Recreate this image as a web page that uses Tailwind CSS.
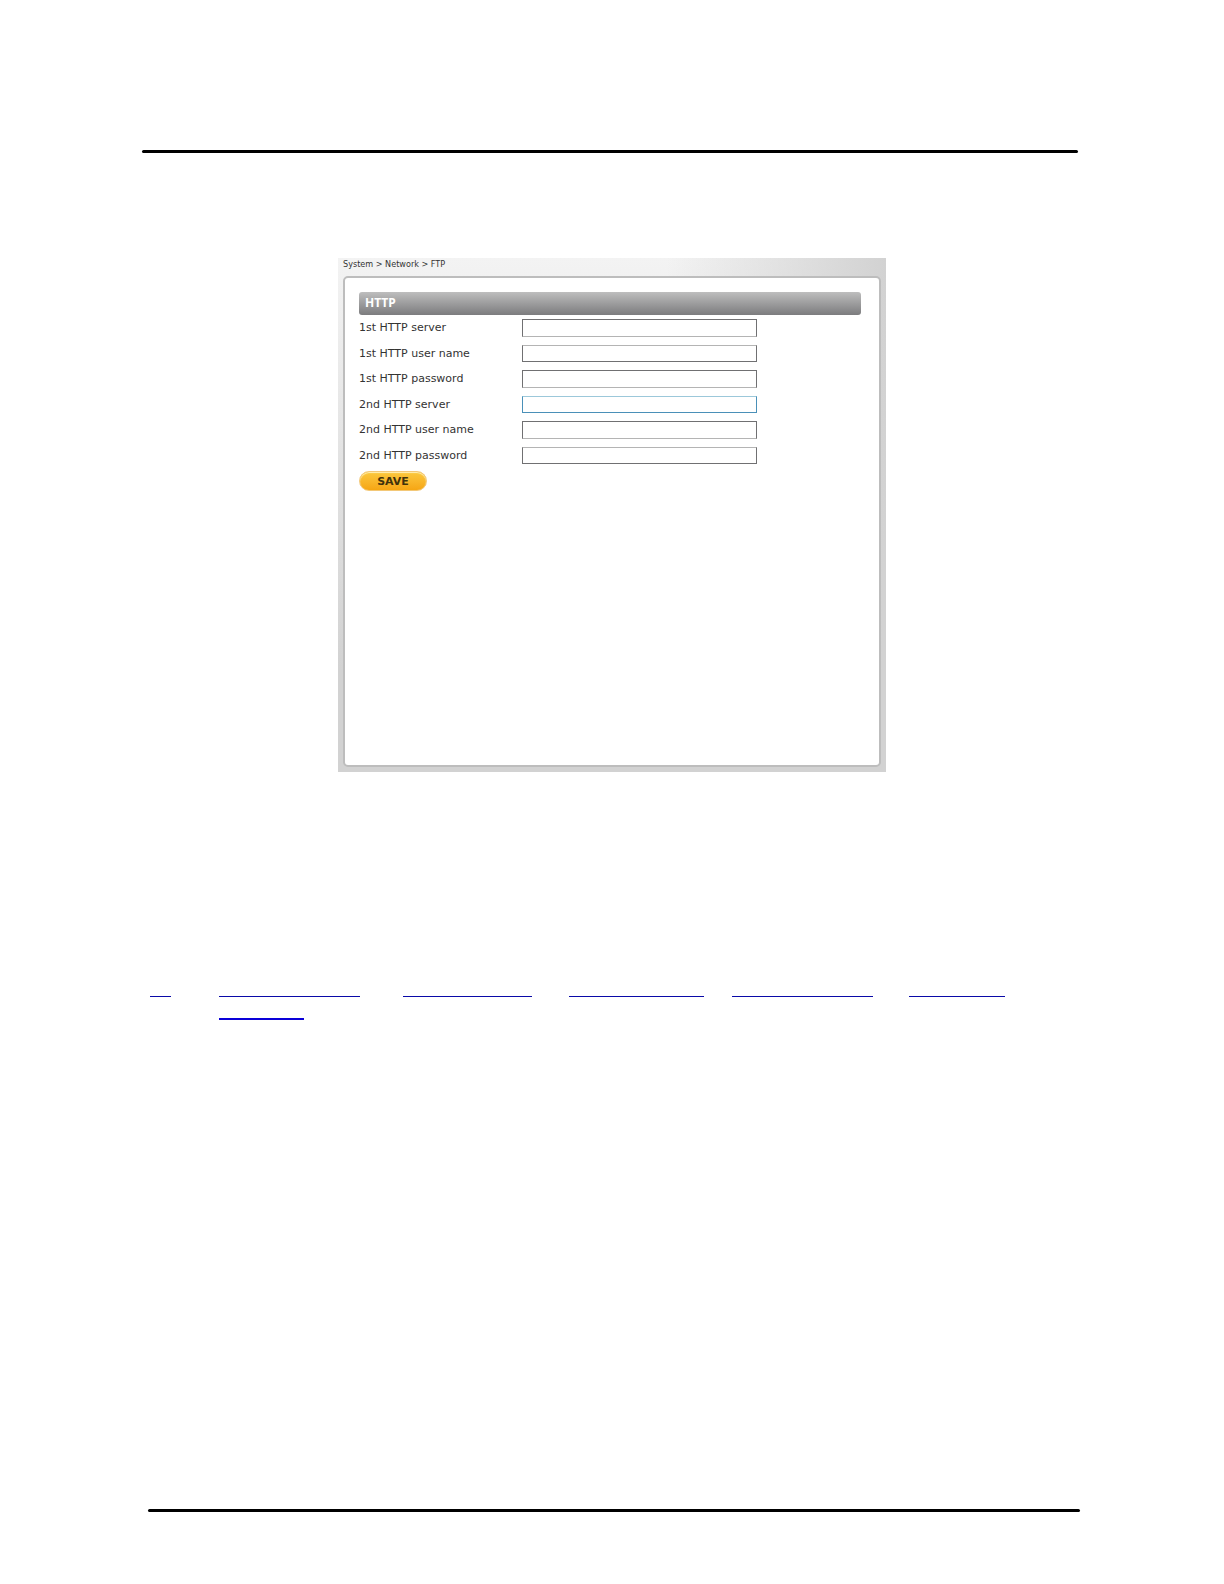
<!DOCTYPE html>
<html lang="en">
<head>
    <meta charset="UTF-8">
    <meta name="viewport" content="width=device-width, initial-scale=1">
    <title>System &gt; Network &gt; FTP</title>
    <script src="https://cdn.jsdelivr.net/npm/@tailwindcss/browser@4"></script>
</head>
<body class="bg-white pt-[150px] text-[#333] font-['DejaVu_Sans',sans-serif]">
    <hr class="ml-[142px] mr-[146px] h-[3px] rounded-full border-0 bg-black">

    <!-- Settings panel -->
    <main class="mx-auto mt-[105px] max-w-[548px] bg-linear-to-b from-[#f3f3f3] to-[#d2d2d2] to-80%">
        <div class="bg-linear-to-r from-transparent from-60% to-[#d2d2d2] px-[5px] pb-[5px]">
            <nav class="h-[18px] text-[9px] leading-[13px] font-['DejaVu_Sans_Condensed','DejaVu_Sans',sans-serif] font-stretch-condensed">System &gt; Network &gt; FTP</nav>

            <section class="min-h-[491px] rounded-[5px] border-2 border-[#bdbdbd] bg-white px-[14px] pt-[14px]">
                <h1 class="mr-1 h-[23px] rounded-[3px] bg-linear-to-b from-[#bebebe] to-[#7c7c7e] pl-[6px] font-['Noto_Sans',sans-serif] text-[12px] leading-[22px] font-bold text-white">HTTP</h1>

                <form class="mt-1 text-[11px] leading-[18px]">
                    <div class="grid grid-cols-[163px_235px] gap-y-2">
                        <label for="server1" class="h-[17px]">1st HTTP server</label>
                        <input id="server1" type="text" class="h-[18px] border border-[#707072] border-b-[#b4b4b4] bg-white px-1">
                        <label for="user1" class="h-[17px]">1st HTTP user name</label>
                        <input id="user1" type="text" class="h-[17px] border border-[#707072] border-t-[#b4b4b4] bg-white px-1">
                        <label for="password1" class="h-[17px]">1st HTTP password</label>
                        <input id="password1" type="password" class="h-[18px] border border-[#707072] border-b-[#b4b4b4] bg-white px-1">
                        <label for="server2" class="h-[17px]">2nd HTTP server</label>
                        <input id="server2" type="text" class="h-[17px] border border-[#4a90b8] border-t-[#9cc8da] bg-white px-1">
                        <label for="user2" class="h-[17px]">2nd HTTP user name</label>
                        <input id="user2" type="text" class="h-[18px] border border-[#707072] border-b-[#b4b4b4] bg-white px-1">
                        <label for="password2" class="h-[17px]">2nd HTTP password</label>
                        <input id="password2" type="password" class="h-[17px] border border-[#707072] border-t-[#b4b4b4] bg-white px-1">
                    </div>
                    <button type="button" class="mt-[7px] block h-5 w-[68px] rounded-full border border-[#f3c878] bg-linear-to-b from-[#fbc83c] to-[#f6a612] pt-px text-[11px] font-bold text-[#40320c] inset-shadow-[0_1px_1px_#fff0b8]">SAVE</button>
                </form>
            </section>
        </div>
    </main>

    <!-- Reference links -->
    <nav class="mr-[146px] ml-[150px] mt-[224px] grid grid-cols-[69px_184px_166px_163px_177px_1fr] gap-y-[21px]">
        <a href="#" aria-label="Number" class="h-px w-[21px] bg-[#0a0aa8]"></a>
        <a href="#" aria-label="First link" class="h-px w-[141px] bg-[#0a0aa8]"></a>
        <a href="#" aria-label="Second link" class="h-px w-[129px] bg-[#0a0aa8]"></a>
        <a href="#" aria-label="Third link" class="h-px w-[135px] bg-[#0a0aa8]"></a>
        <a href="#" aria-label="Fourth link" class="h-px w-[141px] bg-[#0a0aa8]"></a>
        <a href="#" aria-label="Fifth link" class="h-px w-[96px] bg-[#0a0aa8]"></a>
        <a href="#" aria-label="Sixth link" class="col-start-2 h-[2px] w-[85px] bg-[#0a00d8]"></a>
    </nav>

    <hr class="mt-[489px] ml-[148px] mr-[144px] h-[3px] rounded-full border-0 bg-black">
</body>
</html>
